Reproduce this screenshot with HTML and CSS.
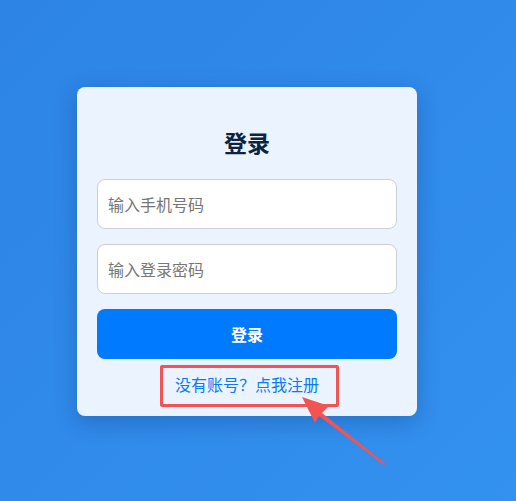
FILE: index.html
```html
<!DOCTYPE html>
<html lang="zh">
<head>
<meta charset="utf-8">
<title>登录</title>
<link rel="stylesheet" href="styles.css">
</head>
<body>
<div class="card">
  <h2 class="title">登录</h2>
  <input class="field" type="text" placeholder="输入手机号码">
  <input class="field" type="password" placeholder="输入登录密码">
  <button class="btn">登录</button>
  <div class="link-row"><a class="link" href="#">没有账号？点我注册</a></div>
</div>
<svg class="arrow" width="516" height="501" viewBox="0 0 516 501">
  <polygon points="302,397 329,406 322,413 386,464 384,465 319,416 315,423" fill="#f25353"/>
</svg>
</body>
</html>
```
FILE: styles.css
```css
html, body {
  margin: 0;
  height: 100%;
}
body {
  background: linear-gradient(135deg, #2d84e5 0%, #3391ef 100%);
  font-family: "Noto Sans CJK SC", "Noto Sans", sans-serif;
  padding: 87px 0 0 77px;
  box-sizing: border-box;
  position: relative;
  overflow: hidden;
}
.card {
  width: 340px;
  box-sizing: border-box;
  background: #ebf3fe;
  border-radius: 8px;
  padding: 39px 20px 22px;
  box-shadow: 0 6px 22px rgba(10, 40, 100, 0.28);
  display: flex;
  flex-direction: column;
}
.title {
  margin: 0 0 21px;
  font-size: 23px;
  line-height: 32px;
  font-weight: 700;
  text-align: center;
  color: #0c2440;
}
.field {
  height: 50px;
  box-sizing: border-box;
  border: 1px solid #cfcfcf;
  border-radius: 8px;
  background: #fff;
  padding: 0 10px;
  font-family: inherit;
  font-size: 16px;
  margin: 0 0 15px;
  outline: none;
}
.field::placeholder {
  color: #767676;
}
.btn {
  height: 50px;
  border: 0;
  border-radius: 8px;
  background: #007bff;
  color: #fff;
  font-family: inherit;
  font-size: 16px;
  font-weight: 700;
}
.link-row {
  margin-top: 15px;
  text-align: center;
  line-height: 20px;
}
.link {
  position: relative;
  color: #0a7af5;
  text-decoration: none;
  font-size: 16px;
}
.link::after {
  content: "";
  position: absolute;
  left: -15px;
  right: -20px;
  top: -7px;
  bottom: -11px;
  border: 3px solid #f25353;
  border-radius: 2px;
}
.arrow {
  position: absolute;
  left: 0;
  top: 0;
}
```
